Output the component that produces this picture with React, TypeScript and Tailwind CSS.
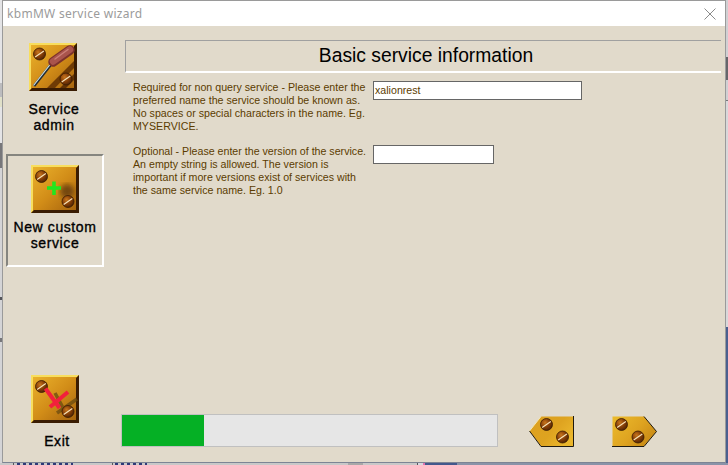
import type { ReactNode } from 'react';

function Screw({ x, y, r = 6, id }: { x: number; y: number; r?: number; id: string }) {
  return (
    <g>
      <circle cx={x} cy={y} r={r} fill={`url(#${id}-screw)`} stroke="#3a1b02" strokeWidth="0.8" />
      <line x1={x - r * 0.72} y1={y + r * 0.5} x2={x + r * 0.72} y2={y - r * 0.5} stroke="#f8e6bd" strokeWidth="1.1" />
    </g>
  );
}

function ScrewDefs({ id }: { id: string }) {
  return (
    <radialGradient id={`${id}-screw`} cx="0.38" cy="0.35" r="0.75">
      <stop offset="0" stopColor="#c9761c" />
      <stop offset="0.5" stopColor="#863f08" />
      <stop offset="1" stopColor="#421e03" />
    </radialGradient>
  );
}

// Gold square tile shared by the three side buttons
function Tile({ id, children }: { id: string; children: ReactNode }) {
  return (
    <svg width="48" height="48" viewBox="0 0 48 48" className="block shrink-0">
      <defs>
        <linearGradient id={`${id}-bg`} x1="0" y1="0" x2="1" y2="1">
          <stop offset="0" stopColor="#ecb52e" />
          <stop offset="0.5" stopColor="#d28d18" />
          <stop offset="1" stopColor="#a05e0c" />
        </linearGradient>
        <ScrewDefs id={id} />
        <filter id={`${id}-blur`}>
          <feGaussianBlur stdDeviation="2.4" />
        </filter>
      </defs>
      <rect width="48" height="48" fill={`url(#${id}-bg)`} />
      <path d="M0 0H48L46 2H2V46L0 48Z" fill="#f8de5e" />
      <path d="M48 0V48H0L3 45H45V3Z" fill="#3a1c02" />
      {children}
    </svg>
  );
}

function ServiceIcon() {
  return (
    <Tile id="svc">
      <path d="M18 45L45 18V25L26 45Z" fill="#6f3b05" />
      <path d="M31 45L45 31V37L37 45Z" fill="#633304" />
      <Screw id="svc" x={10.5} y={11} />
      <Screw id="svc" x={37} y={36} />
      <line x1="24" y1="19" x2="5" y2="43" stroke="#1f2a33" strokeWidth="2.8" />
      <line x1="23.5" y1="18.5" x2="4.5" y2="42.5" stroke="#cfe3e6" strokeWidth="1.2" />
      <line x1="24" y1="19" x2="41" y2="7" stroke="#7c322b" strokeWidth="9.5" strokeLinecap="round" />
      <line x1="24" y1="18.5" x2="41" y2="6.5" stroke="#a9544c" strokeWidth="6.5" strokeLinecap="round" />
      <line x1="26" y1="16" x2="39" y2="6.5" stroke="#cc8078" strokeWidth="1.4" strokeLinecap="round" />
    </Tile>
  );
}

function PlusIcon() {
  return (
    <Tile id="plus">
      <ellipse cx="36" cy="26" rx="7" ry="7" fill="#5a3408" opacity="0.75" filter="url(#plus-blur)" />
      <Screw id="plus" x={10.5} y={11.5} />
      <Screw id="plus" x={37} y={36.5} />
      <path d="M16 23H30M23 16.5V30" stroke="#22e61e" strokeWidth="3.6" />
    </Tile>
  );
}

function ExitIcon() {
  return (
    <Tile id="exit">
      <path d="M24 18L36 40M46 24L26 38" stroke="#6a4a10" strokeWidth="3.5" opacity="0.75" />
      <Screw id="exit" x={10.5} y={11.5} />
      <Screw id="exit" x={37} y={36.5} />
      <path d="M14.5 13.5L28.5 33M37 17L19 32" stroke="#f2203c" strokeWidth="4" />
    </Tile>
  );
}

function NavArrow({ dir }: { dir: 'prev' | 'next' }) {
  const id = dir;
  const prev = dir === 'prev';
  return (
    <svg width="45" height="31" viewBox="0 0 45 31" className="block">
      <defs>
        <linearGradient id={`${id}-bg`} x1="0" y1="0" x2="1" y2="0.6">
          <stop offset="0" stopColor={prev ? '#dca020' : '#ecbb2c'} />
          <stop offset="0.6" stopColor="#dea320" />
          <stop offset="1" stopColor={prev ? '#eab62c' : '#c98b16'} />
        </linearGradient>
        <ScrewDefs id={id} />
      </defs>
      {prev ? (
        <>
          <path d="M12 0.5H44.5V30H12L0.5 15Z" fill={`url(#${id}-bg)`} />
          <path d="M44.5 0V30.5H12L0.5 15" fill="none" stroke="#1f1a10" strokeWidth="1" />
          <path d="M0.5 15L12 0.5" stroke="#f4e6b0" strokeWidth="1" />
          <Screw id={id} x={17.5} y={8.5} />
          <Screw id={id} x={33.5} y={21} />
        </>
      ) : (
        <>
          <path d="M0.5 0.5H32L44.5 15.5L32 30H0.5Z" fill={`url(#${id}-bg)`} />
          <path d="M0 30.5H32L44.5 15.5L32 0.5" fill="none" stroke="#1f1a10" strokeWidth="1" />
          <Screw id={id} x={9.5} y={8.5} />
          <Screw id={id} x={26} y={21} />
        </>
      )}
    </svg>
  );
}

const labelClass =
  "text-center text-[14px] leading-[16px] tracking-[0.6px] text-black [-webkit-text-stroke:0.35px_black] font-['Liberation_Sans',sans-serif]";

const requiredLines = [
  'Required for non query service - Please enter the',
  'preferred name the service should be known as.',
  'No spaces or special characters in the name. Eg.',
  'MYSERVICE.',
];

const optionalLines = [
  'Optional - Please enter the version of the service.',
  'An empty string is allowed. The version is',
  'important if more versions exist of services with',
  'the same service name. Eg. 1.0',
];

function HelpText({ lines }: { lines: string[] }) {
  return (
    <div className="w-[240px] shrink-0 text-[10.65px] leading-[13px] text-[#5b3c00] font-['Liberation_Sans',sans-serif] whitespace-nowrap">
      {lines.map((line) => (
        <div key={line}>{line}</div>
      ))}
    </div>
  );
}

export default function App() {
  return (
    <div className="w-[728px] h-[465px] flex flex-col overflow-hidden bg-[#c8c8cb]">
      <div className="flex h-[463px]">
        {/* what shows of the window behind, left edge */}
        <div className="w-[2px] flex flex-col bg-[#d4d4d6]">
          <div className="h-[83px] bg-[#e4e4e6]" />
          <div className="h-[14px] bg-[#bcbcbe]" />
          <div className="h-[10px] bg-[#e0e0c8]" />
          <div className="h-[36px] bg-[#e4e4e6]" />
          <div className="h-[25px] bg-[#77777a]" />
          <div className="h-[129px]" />
          <div className="h-[3px] bg-[#55555a]" />
          <div className="h-[38px]" />
          <div className="h-[4px] bg-[#77777a]" />
        </div>
        <div className="w-[724px] flex flex-col border border-[#9a9a9a] border-b-[#7d8494]">
          {/* title bar */}
          <div className="h-[25px] bg-white flex items-center justify-between pl-[4px] pr-[9px] shrink-0">
            <span className="text-[12px] tracking-[0.3px] text-[#9b9b9b] font-['Noto_Sans',sans-serif]">kbmMW service wizard</span>
            <svg width="12" height="12" viewBox="0 0 12 12" className="block">
              <path d="M0.5 0.5L11.5 11.5M11.5 0.5L0.5 11.5" stroke="#8a8a8a" strokeWidth="1" />
            </svg>
          </div>

          <div className="flex-1 flex bg-[#e1dacb]">
            {/* side buttons */}
            <div className="w-[118px] shrink-0 flex flex-col pt-[17px] pl-[3px]">
              <div className="w-[98px] flex flex-col items-center pr-[5px]">
                <ServiceIcon />
                <div className={`${labelClass} mt-[10px] pl-[3px]`}>
                  Service
                  <br />
                  admin
                </div>
              </div>
              <div className="mt-[21px] w-[98px] h-[113px] flex flex-col items-center pt-[9px] border-2 border-t-[#85857f] border-l-[#85857f] border-r-white border-b-white">
                <PlusIcon />
                <div className={`${labelClass} mt-[6px]`}>
                  New custom
                  <br />
                  service
                </div>
              </div>
              <div className="mt-[108px] w-[98px] flex flex-col items-center">
                <ExitIcon />
                <div className={`${labelClass} mt-[10px] pl-[4px]`}>Exit</div>
              </div>
            </div>

            {/* main pane */}
            <div className="flex-1 flex flex-col pt-[14px] pr-[4px]">
              <div className="ml-[4px] h-[33px] border-l border-t border-l-[#a0a0a0] border-t-[#a0a0a0] border-b-2 border-b-white flex items-center justify-center pl-[5px] text-[19.3px] text-black font-['Liberation_Sans',sans-serif]">
                Basic service information
              </div>
              <div className="ml-[12px] mt-[8px] flex gap-0">
                <HelpText lines={requiredLines} />
                <div className="w-[209px] h-[19px] bg-white border border-[#666666] px-[1px] text-[10.65px] leading-[16px] text-[#5b3c00] font-['Liberation_Sans',sans-serif]">
                  xalionrest
                </div>
              </div>
              <div className="ml-[12px] mt-[12px] flex gap-0">
                <HelpText lines={optionalLines} />
                <div className="w-[121px] h-[19px] bg-white border border-[#666666]" />
              </div>

              <div className="mt-auto mb-[15px] flex items-end">
                <div className="w-[377px] h-[33px] border border-[#c0c0c0] bg-[#e6e6e6] flex">
                  <div className="w-[82px] bg-[#05b025]" />
                </div>
                <div className="ml-[31px]">
                  <NavArrow dir="prev" />
                </div>
                <div className="ml-[38px]">
                  <NavArrow dir="next" />
                </div>
              </div>
            </div>
          </div>
        </div>
        {/* right edge, same thing */}
        <div className="w-[2px] flex flex-col">
          <div className="h-[57px] bg-[#d0d0d3]" />
          <div className="h-[23px] bg-[#66666a]" />
          <div className="h-[20px] bg-[#d0d0d3]" />
          <div className="h-[1px] bg-[#77777a]" />
          <div className="h-[226px] bg-[#d8d8da]" />
          <div className="flex-1 bg-[#4a5f8f]" />
        </div>
      </div>
      <div className="h-[2px] flex">
        <div className="w-[13px] bg-[#c8c8c8]" />
        <div className="w-[1px] bg-[#55555a]" />
        <div className="w-[3px] bg-[#c8c8c8]" />
        <div className="w-[56px] bg-[repeating-linear-gradient(90deg,#2f3a78_0_3px,#c8c8c8_3px_6px)]" />
        <div className="w-[39px] bg-[#c8c8c8]" />
        <div className="w-[1px] bg-[#55555a]" />
        <div className="w-[2px] bg-[#c8c8c8]" />
        <div className="w-[32px] bg-[repeating-linear-gradient(90deg,#2f3a78_0_3px,#c8c8c8_3px_6px)]" />
        <div className="w-[201px] bg-[#c8c8c8]" />
        <div className="w-[15px] bg-[#a8a8a8]" />
        <div className="w-[54px] bg-[#c8c8c8]" />
        <div className="w-[1px] bg-[#55555a]" />
        <div className="w-[5px] bg-[#d8d8e0]" />
        <div className="w-[2px] bg-[#e070b0]" />
        <div className="w-[32px] bg-[#43588c]" />
        <div className="flex-1 bg-[#8a93a8]" />
      </div>
    </div>
  );
}
